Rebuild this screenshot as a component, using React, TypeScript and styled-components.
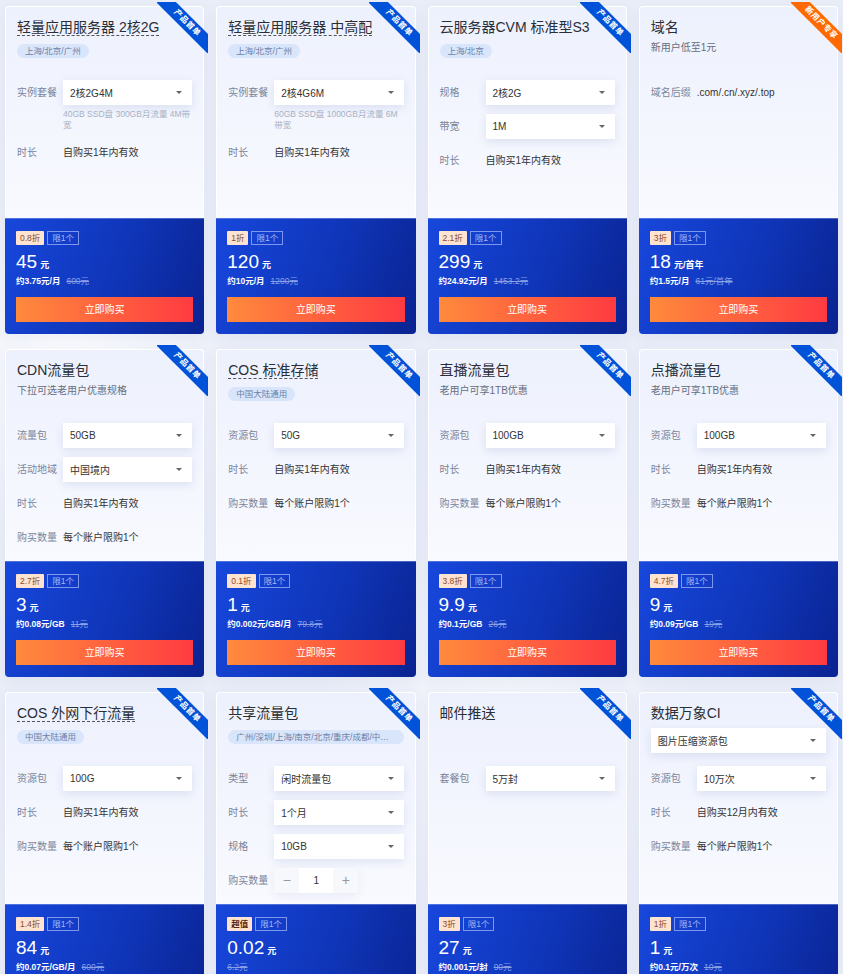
import React from 'react';
import styled, { createGlobalStyle } from 'styled-components';

const GlobalStyle = createGlobalStyle`
  html, body {
    margin: 0;
    padding: 0;
    height: 100%;
    overflow: hidden;
  }
  body {
    background: #e9edf7;
    font-family: 'Liberation Sans', 'Noto Sans CJK SC', sans-serif;
  }
`;

type Row =
  | { type: 'select'; label: string; value: string; desc?: string }
  | { type: 'text'; label: string; value: string }
  | { type: 'stepper'; label: string; value: number };

interface Product {
  title: string;
  dashed?: boolean;
  tag?: string;
  subtitle?: string;
  topSelect?: string;
  ribbon?: 'blue' | 'orange';
  ribbonText?: string;
  rows: Row[];
  discount: string;
  strong?: boolean;
  price: string;
  unit?: string;
  per?: string;
  orig: string;
}

const Page = styled.div`
  min-height: 100vh;
  box-sizing: border-box;
  padding: 6px 5px;
  display: grid;
  grid-template-columns: repeat(4, minmax(0, 1fr));
  column-gap: 12px;
  row-gap: 15px;
  align-content: start;
  background:
    radial-gradient(circle at 8% 36%, rgba(255, 255, 255, 0.8), rgba(255, 255, 255, 0) 18%),
    radial-gradient(circle at 60% 70%, rgba(255, 255, 255, 0.5), rgba(255, 255, 255, 0) 22%),
    #e9edf7;
`;

const Card = styled.div`
  position: relative;
  display: flex;
  flex-direction: column;
  min-width: 0;
  height: 328px;
  box-shadow: 0 4px 14px rgba(60, 90, 170, 0.06);
  border-radius: 4px;
`;

const Top = styled.div`
  height: 212px;
  box-sizing: border-box;
  padding: 12px 11px 0;
  border: 1px solid #fff;
  border-bottom: none;
  border-radius: 4px 4px 0 0;
  background: linear-gradient(180deg, #edf1fd 0%, #f9faff 100%);
`;

const Head = styled.div`
  height: 61px;
  display: flex;
  flex-direction: column;
  align-items: flex-start;
`;

const Title = styled.div<{ $dashed?: boolean }>`
  font-size: 14px;
  line-height: 16px;
  color: #2a2e36;
  border-bottom: 1px ${p => (p.$dashed ? 'dashed #555' : 'solid transparent')};
  white-space: nowrap;
`;

const Tag = styled.div`
  margin-top: 8px;
  height: 14px;
  line-height: 14px;
  padding: 0 8px;
  border-radius: 7px;
  box-sizing: border-box;
  max-width: 100%;
  font-size: 8.5px;
  color: #6b7fa6;
  background: #d9e5fb;
  white-space: nowrap;
  overflow: hidden;
  text-overflow: ellipsis;
`;

const Subtitle = styled.div`
  margin-top: 5px;
  font-size: 10px;
  line-height: 14px;
  color: #666e80;
`;

const Form = styled.div`
  display: flex;
  flex-direction: column;
  gap: 9px;
`;

const FormRow = styled.div`
  display: flex;
  align-items: flex-start;
  min-height: 25px;
`;

const Label = styled.div`
  width: 46px;
  flex-shrink: 0;
  line-height: 25px;
  font-size: 10px;
  color: #7c859a;
  white-space: nowrap;
`;

const Value = styled.div`
  line-height: 25px;
  font-size: 10px;
  color: #333;
  white-space: nowrap;
`;

const Field = styled.div`
  flex: 1;
  min-width: 0;
`;

const Select = styled.div<{ $wide?: boolean }>`
  height: 25px;
  box-sizing: border-box;
  display: flex;
  align-items: center;
  justify-content: space-between;
  padding: 0 10px 0 7px;
  background: #fff;
  box-shadow: 0 3px 10px rgba(40, 70, 150, 0.12);
  font-size: 10px;
  color: #333;
  margin-top: ${p => (p.$wide ? '6px' : '0')};
  width: 100%;
`;

const Caret = styled.span`
  width: 0;
  height: 0;
  border-left: 3px solid transparent;
  border-right: 3px solid transparent;
  border-top: 3.5px solid #666;
`;

const Desc = styled.div`
  margin-top: 4px;
  font-size: 8.5px;
  line-height: 11px;
  color: #a8b1c4;
`;

const Stepper = styled.div`
  display: flex;
  box-shadow: 0 3px 10px rgba(40, 70, 150, 0.08);
`;

const StepButton = styled.div`
  width: 25px;
  height: 25px;
  line-height: 24px;
  text-align: center;
  background: #f6f8fc;
  color: #999;
  font-size: 14px;
`;

const StepNumber = styled.div`
  width: 34px;
  height: 25px;
  line-height: 25px;
  text-align: center;
  background: #fff;
  color: #333;
  font-size: 10px;
`;

const Buy = styled.div`
  height: 116px;
  box-sizing: border-box;
  padding: 12px 11px 0;
  border-radius: 0 0 4px 4px;
  border-top: 1px solid rgba(140, 165, 240, 0.5);
  background: linear-gradient(110deg, #1747dc 0%, #0f35b8 55%, #0a2391 100%);
  color: #fff;
`;

const Badges = styled.div`
  display: flex;
  gap: 3px;
  height: 14px;
`;

const Discount = styled.span<{ $strong?: boolean }>`
  height: 14px;
  line-height: 14px;
  padding: 0 4px;
  border-radius: 1px;
  font-size: 8.5px;
  background: #fde3d0;
  color: ${p => (p.$strong ? '#5a2308' : '#8c4b2b')};
  font-weight: ${p => (p.$strong ? 'bold' : 'normal')};
`;

const Limit = styled.span`
  height: 14px;
  box-sizing: border-box;
  line-height: 12px;
  padding: 0 4px;
  border: 1px solid #7d96ee;
  font-size: 8.5px;
  color: #a6b8f4;
`;

const PriceRow = styled.div`
  margin-top: 6px;
  height: 22px;
  display: flex;
  align-items: baseline;
`;

const Amount = styled.span`
  font-size: 19px;
  line-height: 22px;
  color: #fff;
`;

const Unit = styled.span`
  margin-left: 3px;
  font-size: 9px;
  font-weight: bold;
`;

const Per = styled.div`
  margin-top: 2px;
  font-size: 8.5px;
  line-height: 12px;
  font-weight: bold;
  white-space: nowrap;
`;

const Orig = styled.span<{ $gap?: boolean }>`
  margin-left: ${p => (p.$gap ? '6px' : '0')};
  color: #8aa0e6;
  font-weight: normal;
  text-decoration: line-through;
`;

const BuyButton = styled.div`
  margin-top: 10px;
  height: 25px;
  line-height: 25px;
  text-align: center;
  font-size: 10px;
  color: #fff;
  background: linear-gradient(90deg, #ff8a3c 0%, #ff3b41 100%);
`;

const RibbonBox = styled.div`
  position: absolute;
  top: -4px;
  right: -4px;
  width: 51px;
  height: 51px;
  overflow: hidden;
  pointer-events: none;
`;

const RibbonBand = styled.div<{ $color: string }>`
  position: absolute;
  left: -10px;
  top: 14px;
  width: 80px;
  height: 14px;
  line-height: 14px;
  transform: rotate(45deg);
  text-align: center;
  font-size: 8px;
  font-weight: bold;
  letter-spacing: 0.5px;
  color: #fff;
  background: ${p => p.$color};
`;

const products: Product[] = [
  {
    title: '轻量应用服务器 2核2G',
    dashed: true,
    tag: '上海/北京/广州',
    rows: [
      { type: 'select', label: '实例套餐', value: '2核2G4M', desc: '40GB SSD盘 300GB月流量 4M带宽' },
      { type: 'text', label: '时长', value: '自购买1年内有效' },
    ],
    discount: '0.8折',
    price: '45',
    per: '约3.75元/月',
    orig: '600元',
  },
  {
    title: '轻量应用服务器 中高配',
    dashed: true,
    tag: '上海/北京/广州',
    rows: [
      { type: 'select', label: '实例套餐', value: '2核4G6M', desc: '60GB SSD盘 1000GB月流量 6M带宽' },
      { type: 'text', label: '时长', value: '自购买1年内有效' },
    ],
    discount: '1折',
    price: '120',
    per: '约10元/月',
    orig: '1200元',
  },
  {
    title: '云服务器CVM 标准型S3',
    tag: '上海/北京',
    rows: [
      { type: 'select', label: '规格', value: '2核2G' },
      { type: 'select', label: '带宽', value: '1M' },
      { type: 'text', label: '时长', value: '自购买1年内有效' },
    ],
    discount: '2.1折',
    price: '299',
    per: '约24.92元/月',
    orig: '1453.2元',
  },
  {
    title: '域名',
    subtitle: '新用户低至1元',
    ribbon: 'orange',
    ribbonText: '新用户专享',
    rows: [{ type: 'text', label: '域名后缀', value: '.com/.cn/.xyz/.top' }],
    discount: '3折',
    price: '18',
    unit: '元/首年',
    per: '约1.5元/月',
    orig: '61元/首年',
  },
  {
    title: 'CDN流量包',
    subtitle: '下拉可选老用户优惠规格',
    rows: [
      { type: 'select', label: '流量包', value: '50GB' },
      { type: 'select', label: '活动地域', value: '中国境内' },
      { type: 'text', label: '时长', value: '自购买1年内有效' },
      { type: 'text', label: '购买数量', value: '每个账户限购1个' },
    ],
    discount: '2.7折',
    price: '3',
    per: '约0.08元/GB',
    orig: '11元',
  },
  {
    title: 'COS 标准存储',
    dashed: true,
    tag: '中国大陆通用',
    rows: [
      { type: 'select', label: '资源包', value: '50G' },
      { type: 'text', label: '时长', value: '自购买1年内有效' },
      { type: 'text', label: '购买数量', value: '每个账户限购1个' },
    ],
    discount: '0.1折',
    price: '1',
    per: '约0.002元/GB/月',
    orig: '79.8元',
  },
  {
    title: '直播流量包',
    subtitle: '老用户可享1TB优惠',
    rows: [
      { type: 'select', label: '资源包', value: '100GB' },
      { type: 'text', label: '时长', value: '自购买1年内有效' },
      { type: 'text', label: '购买数量', value: '每个账户限购1个' },
    ],
    discount: '3.8折',
    price: '9.9',
    per: '约0.1元/GB',
    orig: '26元',
  },
  {
    title: '点播流量包',
    subtitle: '老用户可享1TB优惠',
    rows: [
      { type: 'select', label: '资源包', value: '100GB' },
      { type: 'text', label: '时长', value: '自购买1年内有效' },
      { type: 'text', label: '购买数量', value: '每个账户限购1个' },
    ],
    discount: '4.7折',
    price: '9',
    per: '约0.09元/GB',
    orig: '19元',
  },
  {
    title: 'COS 外网下行流量',
    dashed: true,
    tag: '中国大陆通用',
    rows: [
      { type: 'select', label: '资源包', value: '100G' },
      { type: 'text', label: '时长', value: '自购买1年内有效' },
      { type: 'text', label: '购买数量', value: '每个账户限购1个' },
    ],
    discount: '1.4折',
    price: '84',
    per: '约0.07元/GB/月',
    orig: '600元',
  },
  {
    title: '共享流量包',
    tag: '广州/深圳/上海/南京/北京/重庆/成都/中国香港/新加坡',
    rows: [
      { type: 'select', label: '类型', value: '闲时流量包' },
      { type: 'select', label: '时长', value: '1个月' },
      { type: 'select', label: '规格', value: '10GB' },
      { type: 'stepper', label: '购买数量', value: 1 },
    ],
    discount: '超值',
    strong: true,
    price: '0.02',
    orig: '6.2元',
  },
  {
    title: '邮件推送',
    rows: [{ type: 'select', label: '套餐包', value: '5万封' }],
    discount: '3折',
    price: '27',
    per: '约0.001元/封',
    orig: '90元',
  },
  {
    title: '数据万象CI',
    topSelect: '图片压缩资源包',
    rows: [
      { type: 'select', label: '资源包', value: '10万次' },
      { type: 'text', label: '时长', value: '自购买12月内有效' },
      { type: 'text', label: '购买数量', value: '每个账户限购1个' },
    ],
    discount: '1折',
    price: '1',
    per: '约0.1元/万次',
    orig: '10元',
  },
];

const FormLine: React.FC<{ row: Row }> = ({ row }) => (
  <FormRow>
    <Label>{row.label}</Label>
    {row.type === 'text' && <Value>{row.value}</Value>}
    {row.type === 'select' && (
      <Field>
        <Select>
          {row.value}
          <Caret />
        </Select>
        {row.desc && <Desc>{row.desc}</Desc>}
      </Field>
    )}
    {row.type === 'stepper' && (
      <Stepper>
        <StepButton>−</StepButton>
        <StepNumber>{row.value}</StepNumber>
        <StepButton>+</StepButton>
      </Stepper>
    )}
  </FormRow>
);

const ProductCard: React.FC<{ item: Product }> = ({ item }) => (
  <Card>
    <Top>
      <Head>
        <Title $dashed={item.dashed}>{item.title}</Title>
        {item.tag && <Tag>{item.tag}</Tag>}
        {item.subtitle && <Subtitle>{item.subtitle}</Subtitle>}
        {item.topSelect && (
          <Select $wide>
            {item.topSelect}
            <Caret />
          </Select>
        )}
      </Head>
      <Form>
        {item.rows.map((row, i) => (
          <FormLine key={i} row={row} />
        ))}
      </Form>
    </Top>
    <Buy>
      <Badges>
        <Discount $strong={item.strong}>{item.discount}</Discount>
        <Limit>限1个</Limit>
      </Badges>
      <PriceRow>
        <Amount>{item.price}</Amount>
        <Unit>{item.unit ?? '元'}</Unit>
      </PriceRow>
      <Per>
        {item.per}
        <Orig $gap={!!item.per}>{item.orig}</Orig>
      </Per>
      <BuyButton>立即购买</BuyButton>
    </Buy>
    <RibbonBox>
      <RibbonBand $color={item.ribbon === 'orange' ? '#ff6a00' : '#0052d9'}>
        {item.ribbonText ?? '产品首单'}
      </RibbonBand>
    </RibbonBox>
  </Card>
);

export default function App() {
  return (
    <>
      <GlobalStyle />
      <Page>
        {products.map(p => (
          <ProductCard key={p.title} item={p} />
        ))}
      </Page>
    </>
  );
}
